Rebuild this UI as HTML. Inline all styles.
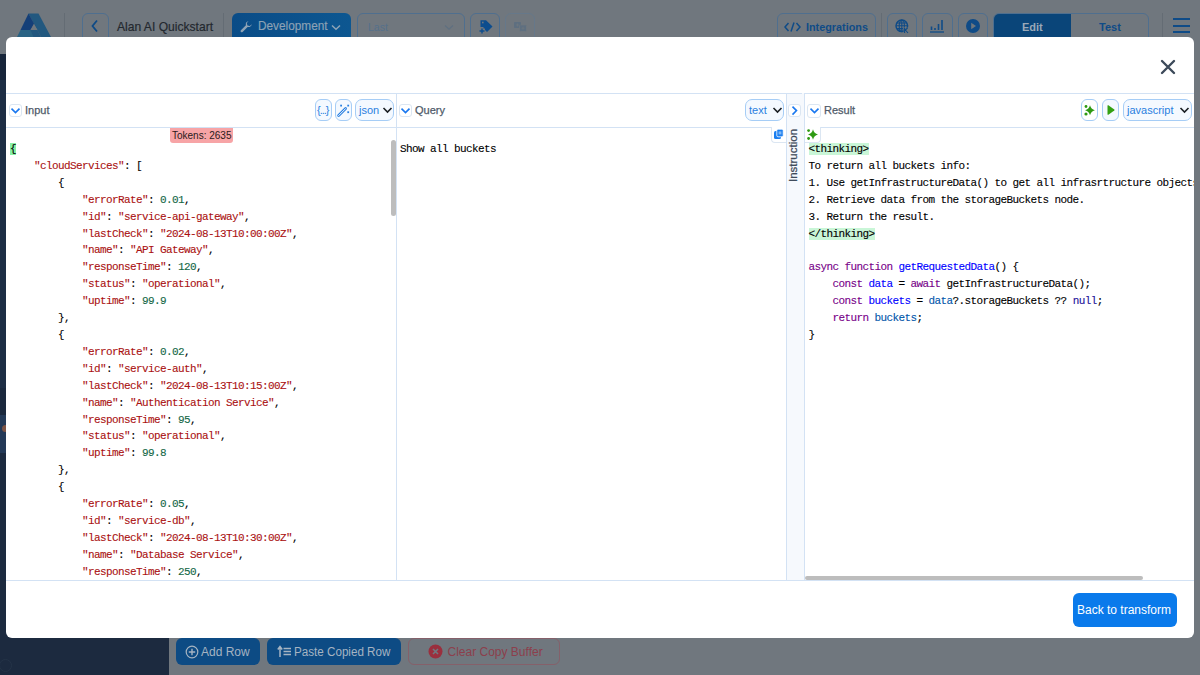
<!DOCTYPE html>
<html><head><meta charset="utf-8">
<style>
*{box-sizing:border-box;margin:0;padding:0}
html,body{width:1200px;height:675px;overflow:hidden}
body{position:relative;background:#70777e;font-family:"Liberation Sans",sans-serif}
.abs,svg{position:absolute}
.t{position:absolute;white-space:nowrap;line-height:1}
/* background app */
#side{left:0;top:54px;width:169px;height:621px;background:#1d2d44}
.hb{position:absolute;top:13px;height:30px;border:1px solid #4f6f8f;border-radius:6px}
.sep{position:absolute;top:13px;width:1px;height:24px;background:#646c74}
.bbtn{position:absolute;top:638px;height:27px;border-radius:6px;background:#0d4b84}
/* modal */
#modal{left:6px;top:37px;width:1188px;height:601px;background:#fff;border-radius:6px}
.ln{position:absolute;background:#d3e2f4}
.chev{position:absolute;width:13px;height:13px;border:1px solid #dbe6f2;border-radius:3px;background:#fff}
.ptitle{position:absolute;top:105px;font-size:11px;color:#4f5a69;line-height:11px;white-space:nowrap;-webkit-text-stroke:0.25px #4f5a69}
.pill{position:absolute;top:99px;height:22px;border:1px solid #a6cdf6;border-radius:7px;background:#f4f9ff}
.pt{position:absolute;top:105px;font-size:11px;color:#2a80e0;line-height:11px;white-space:nowrap}
.code{position:absolute;font-family:"Liberation Mono",monospace;font-size:11px;letter-spacing:-0.6px;line-height:16.9px;white-space:pre;color:#000;-webkit-text-stroke:0.1px currentColor}
.s{color:#aa1111}.n{color:#116644}.k{color:#770088}.d{color:#0000ff}.v{color:#0055aa}.a{color:#221199}
.hl{background:#c9f6d7}.hb2{background:#86f0a6}
</style></head>
<body>
<!-- header background -->
<svg style="left:17px;top:13px" width="36" height="25" viewBox="0 0 36 25">
 <polygon points="11.5,0.5 21.5,0.5 34,24 24,24" fill="#22587f"/>
 <polygon points="11.5,0.5 17,10.5 13.5,17 3.5,17" fill="#143f78"/>
 <polygon points="3.5,17 16,17 20,24 0,24" fill="#2a6384"/>
 <polygon points="13.5,17 17,11.5 20.5,17" fill="#6f777e"/>
 <polygon points="13.5,17 20.5,17 24,24 16.5,24" fill="#23577f"/>
</svg>
<div class="sep" style="left:64px"></div>
<div class="hb" style="left:82px;width:27px"></div>
<svg style="left:90px;top:19px" width="10" height="14" viewBox="0 0 10 14"><path d="M7 1.5L2.5 7L7 12.5" fill="none" stroke="#0e4a86" stroke-width="1.8"/></svg>
<div class="t" id="h_title" style="left:117px;top:20px;font-size:13.5px;color:#23282e;-webkit-text-stroke:0.2px #23282e;transform:scaleX(0.895);transform-origin:0 0">Alan AI Quickstart</div>
<div class="sep" style="left:223px"></div>
<div class="hb" style="left:232px;width:119px;background:linear-gradient(90deg,#0a4c87,#0d5791);border:0"></div>
<div class="t" id="h_dev" style="left:258px;top:20.4px;font-size:12.5px;color:#8da2b5;-webkit-text-stroke:0.15px #8da2b5;transform:scaleX(0.945);transform-origin:0 0">Development</div>
<div class="hb" style="left:357px;width:108px"></div>
<div class="t" id="h_last" style="left:368px;top:21.9px;font-size:10.5px;color:#55708b">Last</div>
<div class="hb" style="left:470px;width:30px"></div>
<div class="hb" style="left:505px;width:30px;border-color:#66788a"></div>
<div class="hb" style="left:777px;width:99px"></div>
<div class="t" id="h_int" style="left:805.5px;top:21.5px;font-size:10.5px;font-weight:bold;color:#0f4b87;transform:scaleX(1.03);transform-origin:0 0">Integrations</div>
<div class="sep" style="left:881px"></div>
<div class="hb" style="left:887px;width:30px"></div>
<div class="hb" style="left:922px;width:31px"></div>
<div class="hb" style="left:958px;width:30px"></div>
<div class="hb" style="left:993px;width:156px"></div>
<div class="abs" style="left:994px;top:14px;width:77px;height:29px;background:#0a4579;border-radius:5px 0 0 0"></div>
<div class="t" id="h_edit" style="left:1022px;top:21.5px;font-size:11px;font-weight:bold;color:#9aa9b8">Edit</div>
<div class="t" id="h_test" style="left:1099px;top:21.5px;font-size:11px;font-weight:bold;color:#0f4b87">Test</div>
<div class="sep" style="left:1162px"></div>
<div class="abs" style="left:1173px;top:18px;width:17px;height:2px;background:#0f4b87"></div>
<div class="abs" style="left:1173px;top:25px;width:17px;height:2px;background:#0f4b87"></div>
<div class="abs" style="left:1173px;top:31px;width:17px;height:2px;background:#0f4b87"></div>

<div id="side" class="abs"></div>
<div class="abs" style="left:0;top:54px;width:6px;height:26px;background:#17253a"></div>
<div class="abs" style="left:0;top:388px;width:6px;height:27px;background:#1a283d"></div>
<div class="abs" style="left:0;top:415px;width:6px;height:38px;background:#233957"></div>
<div class="abs" style="left:1.5px;top:424.5px;width:7px;height:7px;border-radius:50%;background:#7d5446"></div>
<div class="abs" style="left:0;top:453px;width:169px;height:222px;background:#1c2a3f"></div>
<div class="abs" style="left:-1px;top:659px;width:13px;height:13px;border-radius:50%;border:1.5px solid #243347"></div>
<!-- header icons -->
<svg style="left:240px;top:21px" width="13" height="12" viewBox="0 0 13 12"><path d="M11.8 3.2A3.3 3.3 0 0 1 7.6 5.9L2.6 10.9A1.2 1.2 0 0 1 0.9 9.2L5.9 4.2A3.3 3.3 0 0 1 8.6 0.2L6.8 2L7.4 4.4L9.8 5Z" fill="#8ea3b6"/></svg>
<svg style="left:331px;top:24px" width="10" height="7" viewBox="0 0 10 7"><path d="M1 1.5L5 5.2L9 1.5" fill="none" stroke="#8ea3b6" stroke-width="1.5"/></svg>
<svg style="left:444px;top:24px" width="10" height="7" viewBox="0 0 10 7"><path d="M1 1.5L5 5.2L9 1.5" fill="none" stroke="#5f7080" stroke-width="1.2"/></svg>
<svg style="left:478px;top:19px" width="16" height="15" viewBox="0 0 16 15"><path d="M2.5 1.2H8L14.5 7.5L9 13L7 11L7 9.5L5.5 9.5L5.5 8L2.5 8Z" fill="#0d4d8e"/><rect x="4" y="2.7" width="1.6" height="1.6" fill="#6d7780"/><path d="M1.5 12H6.5M4 9.5V14.5" stroke="#0d4d8e" stroke-width="1.4"/></svg>
<svg style="left:513px;top:21px" width="15" height="12" viewBox="0 0 15 12"><rect x="1" y="1" width="7" height="6" rx="0.8" fill="#5e6f80"/><rect x="6.5" y="4" width="7" height="6.5" rx="0.8" fill="#5e6f80" stroke="#6f777e" stroke-width="0.8"/><path d="M3 4H6M4.5 2.5V5.5M8.5 7.2H11.5M10 5.7V8.7" stroke="#6f777e" stroke-width="0.8"/></svg>
<svg style="left:784px;top:22px" width="17" height="10" viewBox="0 0 17 10"><path d="M4.5 1L1 5L4.5 9M12.5 1L16 5L12.5 9M10 0.5L7 9.5" fill="none" stroke="#0f4b87" stroke-width="1.5"/></svg>
<svg style="left:895px;top:19px" width="15" height="15" viewBox="0 0 15 15"><circle cx="6.8" cy="6.8" r="5.8" fill="none" stroke="#0f4b87" stroke-width="1.5"/><path d="M1 6.8H12.6M6.8 1V12.6M1.8 4H11.8M1.8 9.6H8" stroke="#0f4b87" stroke-width="1.1"/><ellipse cx="6.8" cy="6.8" rx="2.6" ry="5.8" fill="none" stroke="#0f4b87" stroke-width="1.1"/><rect x="8.6" y="8.6" width="6" height="6" fill="#6f777e"/><path d="M9.6 9V14M9.6 11.5L12.6 9M10.4 11L13 14" stroke="#0f4b87" stroke-width="1.1"/></svg>
<svg style="left:929px;top:19px" width="17" height="14" viewBox="0 0 17 14"><path d="M2.5 7.5V11M6 9V11M9.5 5V11M13 1V11" stroke="#0f4b87" stroke-width="1.6"/><path d="M1 13H15" stroke="#0f4b87" stroke-width="1.3"/></svg>
<svg style="left:965px;top:18px" width="16" height="16" viewBox="0 0 16 16"><circle cx="8" cy="8" r="7" fill="#0f4b87"/><path d="M6.2 4.8L11 8L6.2 11.2Z" fill="#6f777e"/></svg>
<div class="bbtn" style="left:176px;width:84px"></div>
<div class="t" id="b_add" style="left:201px;top:645.8px;font-size:12px;color:#a6b4c2">Add Row</div>
<div class="bbtn" style="left:267px;width:134px"></div>
<div class="t" id="b_paste" style="left:294px;top:645.8px;font-size:12px;color:#a6b4c2;transform:scaleX(0.97);transform-origin:0 0">Paste Copied Row</div>
<div class="bbtn" style="left:408px;width:152px;background:transparent;border:1px solid #85606a"></div>
<div class="t" id="b_clear" style="left:447.5px;top:645.8px;font-size:12px;color:#8c3f4c">Clear Copy Buffer</div>

<!-- bottom btn icons -->
<svg style="left:185px;top:645px" width="14" height="14" viewBox="0 0 14 14"><circle cx="7" cy="7" r="5.8" fill="none" stroke="#a6b4c2" stroke-width="1.2"/><path d="M7 3.8V10.2M3.8 7H10.2" stroke="#a6b4c2" stroke-width="1.4"/></svg>
<svg style="left:277px;top:645px" width="15" height="13" viewBox="0 0 15 13"><path d="M3 12V2M0.8 4.5L3 1.5L5.2 4.5" fill="none" stroke="#a6b4c2" stroke-width="1.5"/><path d="M6.5 3.5H14M6.5 6.5H14M6.5 9.5H14" stroke="#a6b4c2" stroke-width="1.4"/></svg>
<svg style="left:428px;top:644px" width="15" height="15" viewBox="0 0 15 15"><circle cx="7.5" cy="7.5" r="7" fill="#9a2f3e"/><path d="M5 5L10 10M10 5L5 10" stroke="#707880" stroke-width="1.6"/></svg>
<!-- modal -->
<div id="modal" class="abs"></div>
<svg style="left:1160px;top:59px" width="16" height="16" viewBox="0 0 16 16"><path d="M2 2L14 14M14 2L2 14" stroke="#3d4a5a" stroke-width="2.4" stroke-linecap="round"/></svg>
<!-- lines -->
<div class="abs" style="left:786px;top:93px;width:19px;height:487px;background:#f6f9fd;border-left:1px solid #d3e2f4;border-right:1px solid #d3e2f4"></div>
<div class="ln" style="left:6px;top:93px;width:796px;height:1px"></div>
<div class="ln" style="left:804px;top:93px;width:390px;height:1px"></div>
<div class="ln" style="left:6px;top:127px;width:780px;height:1px"></div>
<div class="ln" style="left:804px;top:127px;width:390px;height:1px"></div>
<div class="ln" style="left:6px;top:580px;width:1188px;height:1px"></div>
<div class="ln" style="left:396px;top:93px;width:1px;height:487px"></div>
<!-- input header -->
<div class="chev" style="left:9px;top:104px"></div>
<svg style="left:9px;top:104px" width="14" height="14" viewBox="0 0 14 14"><path d="M2.5 4.6L6.5 8.6L10.5 4.6" fill="none" stroke="#1a78f0" stroke-width="1.6"/></svg>
<div class="ptitle" id="p_input" style="left:25px">Input</div>
<div class="pill" style="left:315px;width:17px;border-radius:6px"></div>
<div class="t" id="i_brace" style="left:317px;top:104.5px;font-size:11px;color:#2a80e0;letter-spacing:-1px">{...}</div>
<div class="pill" style="left:335px;width:17px;border-radius:6px"></div>
<svg style="left:335px;top:100px" width="17" height="20" viewBox="0 0 17 20">
 <path d="M3.6 15.6L10.6 8.6" stroke="#2a80e0" stroke-width="2.8" stroke-linecap="round"/>
 <path d="M3.6 15.6L10.6 8.6" stroke="#f4f9ff" stroke-width="1" stroke-linecap="round"/>
 <rect x="5.2" y="4.7" width="1.8" height="1.8" fill="#2a80e0"/>
 <rect x="12.3" y="4.7" width="1.8" height="1.8" fill="#2a80e0"/>
 <rect x="12.3" y="11.3" width="1.8" height="1.8" fill="#2a80e0"/>
</svg>
<div class="pill" style="left:355px;width:39px"></div>
<div class="pt" id="s_json" style="left:359px">json</div>
<svg style="left:382px;top:106px" width="11" height="8" viewBox="0 0 11 8"><path d="M1.5 2L5.5 6L9.5 2" fill="none" stroke="#1b1f24" stroke-width="1.6"/></svg>
<!-- query header -->
<div class="chev" style="left:399px;top:104px"></div>
<svg style="left:399px;top:104px" width="14" height="14" viewBox="0 0 14 14"><path d="M2.5 4.6L6.5 8.6L10.5 4.6" fill="none" stroke="#1a78f0" stroke-width="1.6"/></svg>
<div class="ptitle" id="p_query" style="left:415px">Query</div>
<div class="pill" style="left:745px;width:39px"></div>
<div class="pt" id="s_text" style="left:749px">text</div>
<svg style="left:772px;top:106px" width="11" height="8" viewBox="0 0 11 8"><path d="M1.5 2L5.5 6L9.5 2" fill="none" stroke="#1b1f24" stroke-width="1.6"/></svg>
<div class="chev" style="left:788px;top:104px"></div>
<svg style="left:788px;top:104px" width="14" height="14" viewBox="0 0 14 14"><path d="M4.5 2.6L8.5 6.6L4.5 10.6" fill="none" stroke="#1a78f0" stroke-width="1.6"/></svg>
<!-- result header -->
<div class="chev" style="left:807px;top:104px;width:14px;height:13.5px"></div>
<svg style="left:807.5px;top:104px" width="14" height="14" viewBox="0 0 14 14"><path d="M2.5 4.6L6.5 8.6L10.5 4.6" fill="none" stroke="#1a78f0" stroke-width="1.6"/></svg>
<div class="ptitle" id="p_result" style="left:824px">Result</div>
<div class="pill" style="left:1081px;width:17px;border-radius:6px;background:#fff"></div>
<svg style="left:1081px;top:99px" width="17" height="22" viewBox="0 0 17 22"><path d="M9 6.3Q10 10.2 13.9 11.3Q10 12.4 9 16.2Q8 12.4 4.1 11.3Q8 10.2 9 6.3Z" fill="#2e9a13"/><circle cx="5" cy="7.5" r="1.4" fill="#2e9a13"/><circle cx="5" cy="15" r="1.6" fill="#2e9a13"/></svg>
<div class="pill" style="left:1102px;width:17px;border-radius:6px"></div>
<svg style="left:1102px;top:99px" width="17" height="22" viewBox="0 0 17 22"><path d="M5.5 6.8Q5.5 5.8 6.4 6.3L12.3 10.5Q13 11 12.3 11.5L6.4 15.7Q5.5 16.2 5.5 15.2Z" fill="#33a012"/></svg>
<div class="pill" style="left:1123px;width:69px"></div>
<div class="pt" id="s_js" style="left:1127px">javascript</div>
<svg style="left:1179px;top:106px" width="11" height="8" viewBox="0 0 11 8"><path d="M1.5 2L5.5 6L9.5 2" fill="none" stroke="#1b1f24" stroke-width="1.6"/></svg>
<!-- tokens -->
<div class="abs" style="left:170px;top:128px;width:63px;height:15px;background:#f7a4a6;border-radius:0 0 3px 3px"></div>
<div class="t" id="tok" style="left:172px;top:130.6px;font-size:10px;color:#2a1a1a">Tokens: 2635</div>
<!-- copy box + sparkle box -->
<div class="abs" style="left:771px;top:127px;width:15px;height:16px;border-left:1px solid #dbe6f2;border-bottom:1px solid #dbe6f2;border-radius:0 0 0 4px;background:#fff"></div>
<svg style="left:772px;top:128px" width="14" height="13" viewBox="0 0 14 13">
 <rect x="2" y="3" width="7" height="8" rx="1.5" fill="#1a7ef0"/>
 <rect x="4.8" y="1.2" width="6.4" height="7.6" rx="1.3" fill="#1a7ef0" stroke="#fff" stroke-width="0.8"/>
 <rect x="6.6" y="3.4" width="2.8" height="3" fill="#7fb8f7"/>
</svg>
<div class="abs" style="left:805px;top:127px;width:16px;height:16px;border-right:1px solid #dbe6f2;border-bottom:1px solid #dbe6f2;border-radius:0 0 4px 0;background:#fff"></div>
<svg style="left:805px;top:127px" width="16" height="15" viewBox="0 0 16 15"><path d="M8 2.3Q9 6.5 13 7.5Q9 8.5 8 12.7Q7 8.5 3 7.5Q7 6.5 8 2.3Z" fill="#2e9a13"/><circle cx="3.6" cy="3.6" r="1.4" fill="#2e9a13"/><circle cx="3.6" cy="11.5" r="1.4" fill="#2e9a13"/></svg>
<!-- scrollbars -->
<div class="abs" style="left:391px;top:140px;width:5px;height:76px;background:#bdbdbd;border-radius:3px"></div>
<div class="abs" style="left:805px;top:575.5px;width:338px;height:4.5px;background:#bdbdbd;border-radius:2.5px"></div>
<!-- code -->
<div class="code" style="left:10px;top:141px"><span class="hb2">{</span>
    <span class="s">"cloudServices"</span>: [
        {
            <span class="s">"errorRate"</span>: <span class="n">0.01</span>,
            <span class="s">"id"</span>: <span class="s">"service-api-gateway"</span>,
            <span class="s">"lastCheck"</span>: <span class="s">"2024-08-13T10:00:00Z"</span>,
            <span class="s">"name"</span>: <span class="s">"API Gateway"</span>,
            <span class="s">"responseTime"</span>: <span class="n">120</span>,
            <span class="s">"status"</span>: <span class="s">"operational"</span>,
            <span class="s">"uptime"</span>: <span class="n">99.9</span>
        },
        {
            <span class="s">"errorRate"</span>: <span class="n">0.02</span>,
            <span class="s">"id"</span>: <span class="s">"service-auth"</span>,
            <span class="s">"lastCheck"</span>: <span class="s">"2024-08-13T10:15:00Z"</span>,
            <span class="s">"name"</span>: <span class="s">"Authentication Service"</span>,
            <span class="s">"responseTime"</span>: <span class="n">95</span>,
            <span class="s">"status"</span>: <span class="s">"operational"</span>,
            <span class="s">"uptime"</span>: <span class="n">99.8</span>
        },
        {
            <span class="s">"errorRate"</span>: <span class="n">0.05</span>,
            <span class="s">"id"</span>: <span class="s">"service-db"</span>,
            <span class="s">"lastCheck"</span>: <span class="s">"2024-08-13T10:30:00Z"</span>,
            <span class="s">"name"</span>: <span class="s">"Database Service"</span>,
            <span class="s">"responseTime"</span>: <span class="n">250</span>,</div>
<div class="code" style="left:400px;top:141px">Show all buckets</div>
<div class="abs" style="left:805px;top:141px;width:389px;height:435px;overflow:hidden"><div class="code" style="left:3.5px;top:0"><span class="hl">&lt;thinking&gt;</span>
To return all buckets info:
1. Use getInfrastructureData() to get all infrasrtructure objects.
2. Retrieve data from the storageBuckets node.
3. Return the result.
<span class="hl">&lt;/thinking&gt;</span>

<span class="k">async</span> <span class="k">function</span> <span class="d">getRequestedData</span>() {
    <span class="k">const</span> <span class="d">data</span> = <span class="k">await</span> getInfrastructureData();
    <span class="k">const</span> <span class="d">buckets</span> = <span class="v">data</span>?.storageBuckets ?? <span class="a">null</span>;
    <span class="k">return</span> <span class="v">buckets</span>;
}</div></div>
<!-- instruction -->
<div class="t" id="instr" style="left:786px;top:182px;width:54px;height:14px;transform-origin:0 0;transform:rotate(-90deg);font-size:11.5px;line-height:14px;color:#3f4b5b;-webkit-text-stroke:0.25px #3f4b5b">Instruction</div>
<!-- footer -->
<div class="abs" style="left:1073px;top:593px;width:104px;height:33.5px;background:#0a7aeb;border-radius:6px"></div>
<div class="t" id="f_back" style="left:1077px;top:603.6px;font-size:12px;color:#fff">Back to transform</div>
</body></html>
